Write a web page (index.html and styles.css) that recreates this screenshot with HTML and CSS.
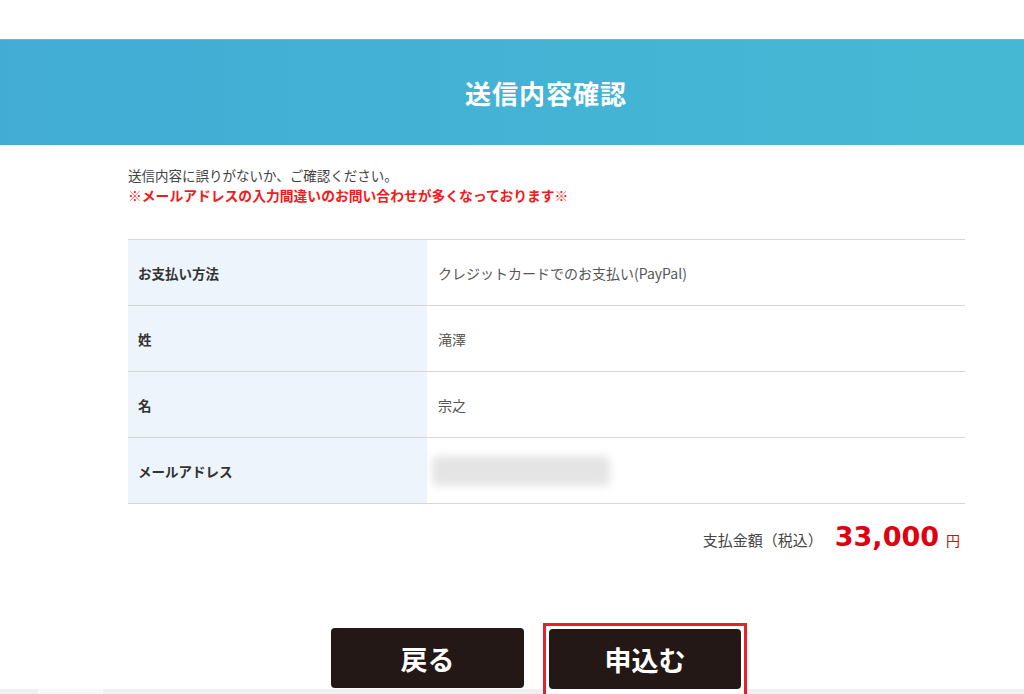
FILE: index.html
```html
<!DOCTYPE html>
<html lang="ja">

<head>
    <meta charset="UTF-8" />
    <meta name="viewport" content="width=device-width, initial-scale=1.0" />
    <title>送信内容確認</title>
    <link rel="stylesheet" href="styles.css">
</head>

<body>
    <div class="page-head">
        <h1>送信内容確認</h1>
    </div>

    <div class="main">
        <div class="lead">
            <p>送信内容に誤りがないか、ご確認ください。</p>
            <p class="warn">※メールアドレスの入力間違いのお問い合わせが多くなっております※</p>
        </div>

        <table class="confirm-table">
            <tr>
                <th>お支払い方法</th>
                <td>クレジットカードでのお支払い(PayPal)</td>
            </tr>
            <tr>
                <th>姓</th>
                <td>滝澤</td>
            </tr>
            <tr>
                <th>名</th>
                <td>宗之</td>
            </tr>
            <tr>
                <th>メールアドレス</th>
                <td><div class="blurred"></div></td>
            </tr>
        </table>

        <div class="total">
            <span class="total-label">支払金額（税込）</span>
            <span class="total-price">33,000</span>
            <span class="total-yen">円</span>
        </div>

        <div class="buttons">
            <button class="btn btn-back">戻る</button>
            <div class="submit-wrap">
                <button class="btn btn-submit">申込む</button>
            </div>
        </div>
    </div>

    <div class="bottom-bar">
        <span class="seg-a"></span>
        <span class="seg-b"></span>
        <span class="seg-c"></span>
    </div>
</body>

</html>
```

FILE: styles.css
```css
* {
    box-sizing: border-box;
    margin: 0;
    padding: 0;
}

body {
    background: #fff;
    font-family: "Noto Sans CJK JP", "Noto Sans", sans-serif;
    color: #333;
}

.page-head {
    margin-top: 39px;
    height: 106px;
    background: linear-gradient(90deg, #42acd5, #45b9d4);
    border-top: 1px solid #5cbde0;
    display: flex;
    align-items: center;
    justify-content: center;
    padding-left: 68px;
}

.page-head h1 {
    color: #fff;
    font-size: 26px;
    font-weight: bold;
    letter-spacing: 1px;
}

.main {
    width: 837px;
    margin-left: 128px;
}

.lead {
    padding-top: 20px;
    font-size: 13.5px;
    line-height: 20px;
    color: #444;
}

.lead .warn {
    color: #f21a1a;
    font-size: 13.8px;
    font-weight: bold;
}

.confirm-table {
    width: 100%;
    margin-top: 34px;
    border-collapse: collapse;
    border-top: 1px solid #d6d6d6;
}

.confirm-table tr {
    border-bottom: 1px solid #d6d6d6;
}

.confirm-table th,
.confirm-table td {
    height: 66px;
    padding: 0 10px;
    text-align: left;
    vertical-align: middle;
}

.confirm-table th {
    width: 299px;
    background: #edf4fb;
    font-size: 13.5px;
    font-weight: bold;
    color: #333;
}

.confirm-table td {
    color: #555;
    font-size: 14px;
    padding-left: 11px;
}

.blurred {
    width: 178px;
    height: 30px;
    margin-left: -6px;
    background: #e4e4e4;
    filter: blur(4px);
    border-radius: 6px;
}

.total {
    display: flex;
    justify-content: flex-end;
    align-items: baseline;
    padding-right: 5px;
    margin-top: 17px;
}

.total-label {
    font-size: 15px;
    color: #444;
}

.total-price {
    margin-left: 12px;
    font-size: 27px;
    font-weight: bold;
    color: #e00010;
    font-family: "DejaVu Sans", Verdana, sans-serif;
}

.total-yen {
    margin-left: 7px;
    font-size: 14px;
    color: #e00010;
}

.buttons {
    display: flex;
    align-items: flex-start;
    margin-top: 71px;
    margin-left: 203px;
    gap: 19px;
}

.btn {
    width: 193px;
    height: 60px;
    border: none;
    border-radius: 4px;
    background: #231815;
    color: #fff;
    font-family: "Noto Sans CJK JP", sans-serif;
    font-size: 27px;
    font-weight: bold;
    cursor: pointer;
}

.btn-back {
    margin-top: 5px;
}

.submit-wrap {
    position: relative;
    z-index: 2;
    border: 3px solid #e8202a;
    padding: 3px;
    padding-bottom: 10px;
    background: #fff;
}

.btn-submit {
    width: 192px;
    display: block;
}

.bottom-bar {
    position: fixed;
    left: 0;
    bottom: 0;
    width: 100%;
    height: 5px;
    display: flex;
    z-index: 1;
}

.bottom-bar span {
    display: block;
    height: 100%;
}

.seg-a {
    width: 38px;
    background: #f0f0f0;
}

.seg-b {
    width: 65px;
    background: #f8f8f8;
}

.seg-c {
    flex: 1;
    background: #f0f0f0;
}
```
